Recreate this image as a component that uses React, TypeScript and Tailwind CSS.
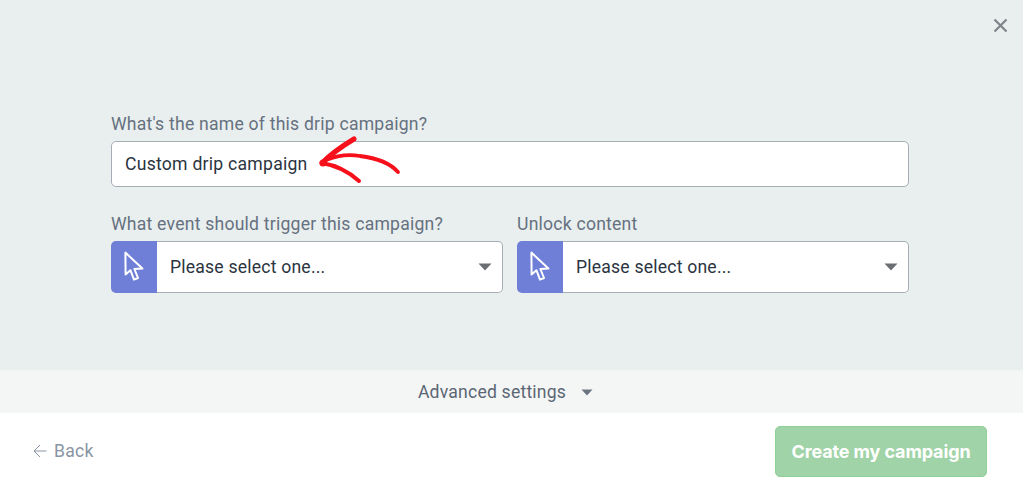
import React from "react";

function Cursor() {
  return (
    <svg width="20" height="32" viewBox="0 0 20 32" fill="none">
      <path d="M1.4 1.6 L1.6 23.4 L6.4 19.2 L10 28.6 L14 27 L10.4 18 L18.4 17.6 Z" stroke="#fff" strokeWidth="2" strokeLinejoin="round" />
    </svg>
  );
}

function Caret() {
  return (
    <svg width="14" height="8" viewBox="0 0 14 8" className="block">
      <path d="M0.5 0.5 H13.5 L7 7.5 Z" fill="#6b6f73" />
    </svg>
  );
}

function SelectField({ label }: { label: string }) {
  return (
    <div className="flex flex-col">
      <label className="text-[17.6px] leading-[20px] tracking-[0.22px] text-[#657180] mb-[7px]">{label}</label>
      <div className="h-[52px] flex items-stretch">
        <div className="w-[46px] bg-[#6f7fd8] rounded-l-[5px] flex items-center justify-center shrink-0">
          <Cursor />
        </div>
        <div className="flex-1 flex items-center justify-between bg-white border border-l-0 border-[#a5adb5] rounded-r-[5px] pl-[13px] pr-[10px] text-[17.6px] tracking-[0.2px] text-[#2b3440]">
          <span>Please select one...</span>
          <Caret />
        </div>
      </div>
    </div>
  );
}

export default function App() {
  return (
    <div className="w-[1023px] h-[487px] flex flex-col bg-white overflow-hidden relative font-['Roboto',sans-serif]">
      <div className="h-[370px] bg-[#e9eeee] pt-[114px] pl-[111px] pr-[114px] relative">
        <button className="absolute top-[18px] right-[15px] text-[#7d848a]">
          <svg width="15" height="15" viewBox="0 0 15 15" className="block">
            <path d="M1.5 1.5 L13.5 13.5 M13.5 1.5 L1.5 13.5" stroke="#7d848a" strokeWidth="2.2" />
          </svg>
        </button>
        <label className="block text-[17.6px] leading-[20px] tracking-[0.22px] text-[#657180] mb-[7px]">
          What's the name of this drip campaign?
        </label>
        <div className="h-[46px] bg-white border border-[#a5adb5] rounded-[5px] flex items-center pl-[13px] text-[17.6px] tracking-[0.25px] text-[#2b3440]">
          Custom drip campaign
        </div>
        <div className="grid grid-cols-2 gap-[14px] mt-[27px]">
          <SelectField label="What event should trigger this campaign?" />
          <SelectField label="Unlock content" />
        </div>
        <svg className="absolute left-[316px] top-[134px]" width="86" height="52" viewBox="0 0 86 52" fill="none">
          <path d="M38 5 C28 11 16 19 6 29" stroke="#f5101c" strokeWidth="5" strokeLinecap="round" />
          <path d="M6 29 C18 31 32 37 43 47" stroke="#f5101c" strokeWidth="4" strokeLinecap="round" />
          <path d="M10 26 C22 21 33 20 44 22 C60 24 74 29 82 38" stroke="#f5101c" strokeWidth="3.8" strokeLinecap="round" />
          <circle cx="7" cy="29" r="3.6" fill="#f5101c" />
        </svg>
      </div>
      <div className="h-[43px] bg-[#f4f6f6] flex items-center justify-center gap-[15px] pt-[1px] text-[17.6px] tracking-[0.2px] text-[#5b6674] pr-[12px]">
        <span>Advanced settings</span>
        <svg width="12" height="7" viewBox="0 0 12 7" className="block">
          <path d="M0.5 0.5 H11.5 L6 6.5 Z" fill="#6a7580" />
        </svg>
      </div>
      <div className="flex-1 flex items-center justify-between pl-[33px] pr-[36px] pt-[2px]">
        <div className="flex items-center gap-[7px] pt-[1px] text-[17.6px] text-[#8a95a3] tracking-[0.25px]">
          <svg width="14" height="14" viewBox="0 0 14 14" fill="none" className="block">
            <path d="M13.5 7 H1 M7 1 L1 7 L7 13" stroke="#8a95a3" strokeWidth="1" />
          </svg>
          <span>Back</span>
        </div>
        <button className="w-[212px] h-[51px] rounded-[5px] bg-[#a0d3a7] border border-[#8fd095] text-white text-[18px] font-bold font-['Inter',sans-serif] tracking-[-0.12px] flex items-center justify-center">
          Create my campaign
        </button>
      </div>
    </div>
  );
}
